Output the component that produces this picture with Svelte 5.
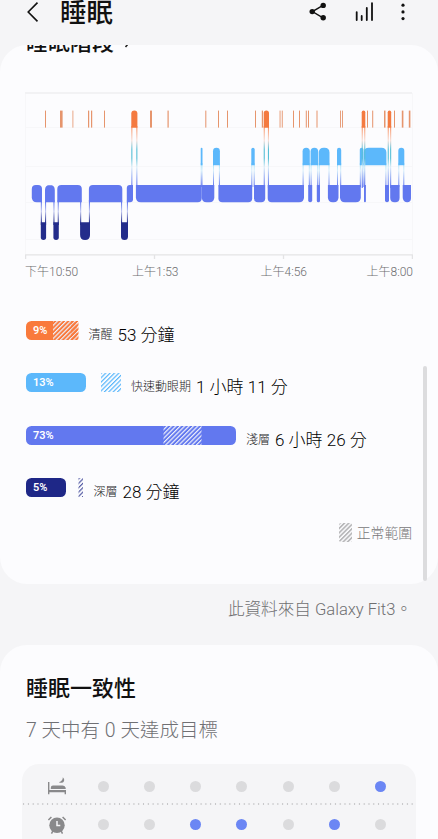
<script>
    // sleep chart, x runs from bedtime to wake-up
    const awakeTicks = [
        [45, 1], [60, 2.6], [72.5, 0.8], [88, 1.2], [91, 1.2], [104, 1], [150, 2], [167.5, 1.2],
        [205.3, 1], [218, 1], [227, 1], [255, 1], [261.8, 1.2], [279.6, 0.9], [281.8, 0.9],
        [293, 1], [299, 1], [305.8, 1], [308, 1], [316.5, 1], [340, 0.9], [342, 0.9],
        [367, 1], [372.2, 1], [384, 1.5], [394, 1], [401.8, 1.6], [408.8, 1.6]
    ];
    const awake = [[131.3, 137.4], [263.7, 269], [361.7, 365.3], [387.7, 391.2]];
    const rem = [
        [200.7, 202.5], [213, 219.9], [251.3, 254.7], [302.6, 309.8], [310.6, 318.2],
        [318.8, 329.5], [337, 341.2], [359.8, 363.5], [363.8, 386.4], [398.3, 404.3]
    ];
    // corners: top-left, top-right, bottom-right, bottom-left
    const light = [
        [31.8, 42, 4, 4, 0, 5], [45, 54.8, 5, 5, 0, 0], [57.3, 81.8, 4, 4, 0, 0], [88.9, 122.3, 4, 4, 0, 0],
        [126.8, 133, 3, 0, 3, 0], [135.9, 201.7, 0, 0, 4, 5], [201.7, 214.3, 0, 0, 5, 5], [218.4, 252.2, 0, 0, 4, 4],
        [254, 265.2, 0, 0, 4, 4], [267.7, 304, 0, 0, 5, 4], [308.2, 312.2, 0, 0, 2, 2], [316.8, 320, 0, 0, 1.5, 1.5],
        [327.9, 338.5, 0, 0, 5, 5], [340, 360.8, 0, 0, 5, 5], [364, 365.9, 0, 0, 1, 1], [385, 389, 0, 0, 2, 2],
        [390.2, 399.6, 0, 0, 4.5, 4.5], [402.7, 411, 0, 0, 4, 5]
    ];
    const deep = [[40.8, 46.1], [53.4, 58.8], [80.1, 90], [121, 128]];

    const stages = [
        { name: "清醒", pct: "9%", time: "53 分鐘", color: "#f97a3c", bar: 51, range: [27, 26], gap: 10 },
        { name: "快速動眼期", pct: "13%", time: "1 小時 11 分", color: "#5cb8fb", bar: 60, range: [75, 20], gap: 10.5 },
        { name: "淺層", pct: "73%", time: "6 小時 26 分", color: "#6278ef", bar: 210, range: [137.5, 38], gap: 10.5 },
        { name: "深層", pct: "5%", time: "28 分鐘", color: "#1e2787", bar: 40, range: [52.5, 5], gap: 10.5 }
    ];

    const bedDays = [0, 0, 0, 0, 0, 0, 1];
    const wakeDays = [0, 0, 1, 1, 0, 1, 0];

    function block([x1, x2, tl, tr, br, bl], y1, y2) {
        return `M${x1 + tl} ${y1}H${x2 - tr}Q${x2} ${y1} ${x2} ${y1 + tr}V${y2 - br}Q${x2} ${y2} ${x2 - br} ${y2}`
            + `H${x1 + bl}Q${x1} ${y2} ${x1} ${y2 - bl}V${y1 + tl}Q${x1} ${y1} ${x1 + tl} ${y1}Z`;
    }

    function cap([x1, x2], up) {
        const r = Math.min((x2 - x1) / 2, 5);
        return up ? [x1, x2, r, r, 0, 0] : [x1, x2, 0, 0, r, r];
    }
</script>

<div class="screen">
    <header>
        <svg class="back" viewBox="0 0 14 22"><path d="M11.5 1.6 2.2 11l9.3 9.4" /></svg>
        <h1>睡眠</h1>
        <svg class="share" viewBox="0 0 18 20">
            <path d="M14 3.4 3.4 9.6 14 15.8" />
            <circle cx="14.2" cy="3.4" r="2.7" /><circle cx="3.2" cy="9.6" r="2.7" /><circle cx="14.2" cy="15.7" r="2.7" />
        </svg>
        <svg class="signal" viewBox="0 0 19 20"><path d="M1.7 10.1v8M6.7 14v4.1M11.8 6v12.1M17 1.1v17" /></svg>
        <svg class="more" viewBox="0 0 4 20"><circle cx="2" cy="3.2" r="1.6" /><circle cx="2" cy="9.9" r="1.6" /><circle cx="2" cy="16.6" r="1.6" /></svg>
    </header>

    <section class="card stages">
        <h2>睡眠階段 <svg viewBox="0 0 8 14"><path d="m1.5 1 5 6-5 6" /></svg></h2>

        <svg class="chart" viewBox="25 92 388 167">
            <defs>
                <linearGradient id="toDeep" gradientUnits="userSpaceOnUse" x1="0" y1="202" x2="0" y2="223">
                    <stop offset="0" stop-color="#6278ef" /><stop offset=".45" stop-color="#c3c9f0" /><stop offset="1" stop-color="#232c8b" />
                </linearGradient>
                <linearGradient id="toRem" gradientUnits="userSpaceOnUse" x1="0" y1="164" x2="0" y2="186">
                    <stop offset="0" stop-color="#a5e3fb" /><stop offset=".3" stop-color="#d6effb" /><stop offset="1" stop-color="#6278ef" />
                </linearGradient>
                <linearGradient id="toAwake" gradientUnits="userSpaceOnUse" x1="0" y1="127" x2="0" y2="186">
                    <stop offset="0" stop-color="#f99465" /><stop offset=".23" stop-color="#f6ded7" />
                    <stop offset=".38" stop-color="#58bfd6" /><stop offset=".53" stop-color="#58bfd6" />
                    <stop offset=".68" stop-color="#d9edf8" /><stop offset="1" stop-color="#6278ef" />
                </linearGradient>
            </defs>
            <path class="grid" d="M25 93H412M25.5 93V254M412.5 93V254M25 127.5H412M25 166.5H412M25 202.5H412M25 239.5H412" />
            <path class="top" d="M25 93H412" />
            <path class="axis" d="M25 254.8H413M25.6 255v4M154.5 255v4M283.5 255v4M412.4 255v4" />

            {#each deep as d}
                <rect x={d[0]} y="200" width="1.1" height="25" fill="url(#toDeep)" />
                <rect x={d[1] - 1.1} y="200" width="1.1" height="25" fill="url(#toDeep)" />
                <path d={block(cap(d, false), 222.3, 240)} fill="#232c8b" />
            {/each}
            {#each light as l}
                <path d={block(l, 185, 202.3)} fill="#6278ef" />
            {/each}
            {#each rem as r}
                <rect x={r[0]} y="163" width="1" height="24" fill="url(#toRem)" />
                <rect x={r[1] - 1} y="163" width="1" height="24" fill="url(#toRem)" />
                <path d={block(cap(r, true), 147.8, 165.2)} fill="#5cb8fb" />
            {/each}
            {#each awake as a}
                <rect x={a[0]} y="126" width="1.1" height="62" fill="url(#toAwake)" />
                <rect x={a[1] - 1.1} y="126" width="1.1" height="62" fill="url(#toAwake)" />
                <path d={block(cap(a, true), 110.4, 127.8)} fill="#f47a40" />
            {/each}
            {#each awakeTicks as [x, w]}
                <rect {x} y="110.6" width={w} height="17" fill="#e07b49" opacity=".8" />
            {/each}
        </svg>
        <div class="times">
            <span>下午10:50</span><span>上午1:53</span><span>上午4:56</span><span>上午8:00</span>
        </div>

        <div class="rows">
            {#each stages as s, i}
                <div class="row">
                    <svg class="bar" style:width="{Math.max(s.bar, s.range[0] + s.range[1])}px" style:margin-right="{s.gap}px">
                        <defs>
                            <pattern id="hatch{i}" width="3.1" height="6" patternUnits="userSpaceOnUse" patternTransform="rotate(45)">
                                <rect width="1.2" height="6" fill={i == 0 || i == 2 ? "#eceefa" : s.color} />
                            </pattern>
                            <pattern id="edge{i}" width="3.1" height="6" patternUnits="userSpaceOnUse" patternTransform="rotate(45)">
                                <rect x="1.2" width="1.9" height="6" fill={s.color} />
                            </pattern>
                        </defs>
                        <rect width={s.bar} height="19" rx="5.5" fill={s.color} />
                        <rect x={s.range[0]} width={s.range[1] - (i == 0 ? 2 : 0)} height="19" fill="url(#hatch{i})" opacity={i == 3 ? 0.75 : 1} />
                        {#if i == 0}
                            <rect x="45" width="7.5" height="19" fill="url(#edge{i})" />
                        {/if}
                        <text x="7" y="13.4">{s.pct}</text>
                    </svg>
                    <span class="name">{s.name}</span>
                    <span class="time">{s.time}</span>
                </div>
            {/each}
        </div>

        <div class="legend">
            <svg viewBox="0 0 13 19">
                <defs>
                    <pattern id="hatchGrey" width="3.1" height="6" patternUnits="userSpaceOnUse" patternTransform="rotate(45)">
                        <rect width="1.7" height="6" fill="#b8b8ba" />
                    </pattern>
                </defs>
                <rect width="13" height="19" rx="2" fill="url(#hatchGrey)" />
            </svg>
            正常範圍
        </div>
    </section>

    <p class="source">此資料來自 Galaxy Fit3。</p>

    <section class="card consistency">
        <h2>睡眠一致性</h2>
        <p>7 天中有 0 天達成目標</p>
        <div class="days">
            <div class="day-row">
                <svg viewBox="0 0 20 20">
                    <path d="M1 6h1.4v8H19v4.200h-1.400v-2H2.400v2H1zM3.800 13v-1.200q0-2.300 2.200-2.300H15.500q2.200 0 3.200 2.300V13z" />
                    <path d="M15.800 1.200Q16 4.800 11.800 6.200q4 1.600 5.300-1.300.7-2-1.300-3.700z" />
                </svg>
                {#each bedDays as on}<i class:on></i>{/each}
            </div>
            <div class="day-row">
                <svg viewBox="0 0 20 20">
                    <circle cx="10" cy="10.2" r="7.7" />
                    <path class="line" d="m5.800 16-1.300 2.600M14.200 16l1.300 2.600M1.400 5l3-3M18.600 5l-3-3" />
                    <path class="hand" d="M10 6v4.500h3.300" />
                </svg>
                {#each wakeDays as on}<i class:on></i>{/each}
            </div>
        </div>
    </section>

    <div class="scrollbar"></div>
</div>

<style>
    :global(body) {
        background: #f5f5f7;
    }

    .screen {
        position: relative;
        width: 438px;
        height: 839px;
        overflow: hidden;
        background: #f5f5f7;
        color: #111;
        font-family: Roboto, "Noto Sans CJK TC", sans-serif;
    }

    h1, h2, p {
        margin: 0;
    }

    header {
        height: 45px;
        display: flex;
        align-items: flex-start;
    }

    header svg {
        flex: none;
        fill: #111;
        stroke: #111;
        stroke-width: 0;
    }

    h1 {
        flex: 1;
        margin-left: 20px;
        font-size: 26.5px;
        font-weight: 500;
        line-height: 26px;
    }

    .back {
        width: 14px;
        height: 22px;
        margin: 1px 0 0 26px;
    }

    .back path {
        fill: none;
        stroke-width: 1.6;
    }

    .share {
        width: 18px;
        height: 20px;
        margin: 2px 28px 0 0;
    }

    .share path {
        fill: none;
        stroke-width: 1.4;
    }

    .signal {
        width: 19px;
        height: 20px;
        margin: 2px 27px 0 0;
    }

    .signal path {
        stroke-width: 1.8;
        stroke-linecap: round;
    }

    .more {
        width: 4px;
        height: 20px;
        margin: 2px 33px 0 0;
    }

    .card {
        box-sizing: border-box;
        overflow: hidden;
        border-radius: 27px;
        background: #fcfcfe;
    }

    h2 {
        font-size: 22px;
        font-weight: 500;
        line-height: 30px;
    }

    .stages {
        height: 539px;
        padding: 0 25px;
    }

    .stages h2 {
        margin: -17px 0 34px 1px;
    }

    .stages h2 svg {
        width: 8px;
        height: 14px;
        margin: 0 0 2px 5px;
        fill: none;
        stroke: #222;
        stroke-width: 1.6;
    }

    .chart {
        display: block;
        width: 388px;
        height: 167px;
    }

    .grid {
        fill: none;
        stroke: #f7f7f9;
    }

    .top {
        stroke: #f2f2f4;
        stroke-width: 2;
    }

    .axis {
        fill: none;
        stroke: #e3e3e5;
        stroke-width: 1.3;
    }

    .times {
        display: grid;
        grid-template-columns: 107px 128.5px 1fr auto;
        margin-top: 5px;
        width: 388px;
        font-size: 12px;
        font-weight: 300;
        line-height: 16px;
        color: #6d6d6f;
    }

    .rows {
        margin: 41px 0 0;
    }

    .row {
        display: flex;
        height: 52.3px;
        padding-left: 0.5px;
    }

    .bar {
        display: block;
        flex: none;
        height: 19px;
    }

    .bar text {
        fill: #fff;
        font-size: 11px;
        font-weight: 600;
    }

    .name {
        margin-top: 6px;
        font-size: 12px;
        font-weight: 300;
        line-height: 16px;
        color: #1c1c1e;
    }

    .time {
        margin: 2px 0 0 5px;
        font-size: 17px;
        font-weight: 300;
        line-height: 24px;
        color: #000;
    }

    .legend {
        display: flex;
        justify-content: flex-end;
        gap: 5px;
        margin: -7px 1px 0 0;
        font-size: 13.8px;
        font-weight: 300;
        line-height: 20px;
        color: #78787a;
    }

    .legend svg {
        width: 13px;
        height: 19px;
    }

    .source {
        height: 61px;
        padding-right: 26px;
        box-sizing: border-box;
        text-align: right;
        font-size: 16.6px;
        font-weight: 300;
        line-height: 51px;
        color: #6f6f71;
    }

    .consistency {
        height: 220px;
        padding: 29px 22px 0;
    }

    .consistency h2 {
        margin-left: 4px;
    }

    .consistency p {
        margin: 13px 0 0 4px;
        font-size: 19.5px;
        font-weight: 300;
        line-height: 28px;
        color: #707074;
    }

    .days {
        height: 90px;
        margin-top: 19px;
        border-radius: 17px;
        background: #f5f5f7;
    }

    .day-row {
        display: flex;
        align-items: center;
        height: 33px;
        padding: 0 0 0 25px;
    }

    .day-row:first-child {
        height: 44px;
        box-sizing: border-box;
        background: radial-gradient(circle, #c6c6c8 0.8px, transparent 1.1px) 4px 38px / 4.8px 4px repeat-x;
    }

    .day-row svg {
        flex: none;
        width: 20px;
        height: 20px;
        margin-right: 30.5px;
        fill: #89898b;
    }

    .day-row .line {
        stroke: #89898b;
        stroke-width: 1.5;
    }

    .day-row .hand {
        fill: none;
        stroke: #f5f5f7;
        stroke-width: 1.5;
    }

    i {
        flex: none;
        width: 11px;
        height: 11px;
        margin-right: 35.3px;
        border-radius: 50%;
        background: #dbdbdd;
    }

    i:last-child {
        margin-right: 0;
    }

    i.on {
        background: #6b86f4;
    }

    .scrollbar {
        position: absolute;
        top: 366px;
        right: 11px;
        width: 4px;
        height: 215px;
        border-radius: 2px;
        background: #dcdcde;
    }
</style>
